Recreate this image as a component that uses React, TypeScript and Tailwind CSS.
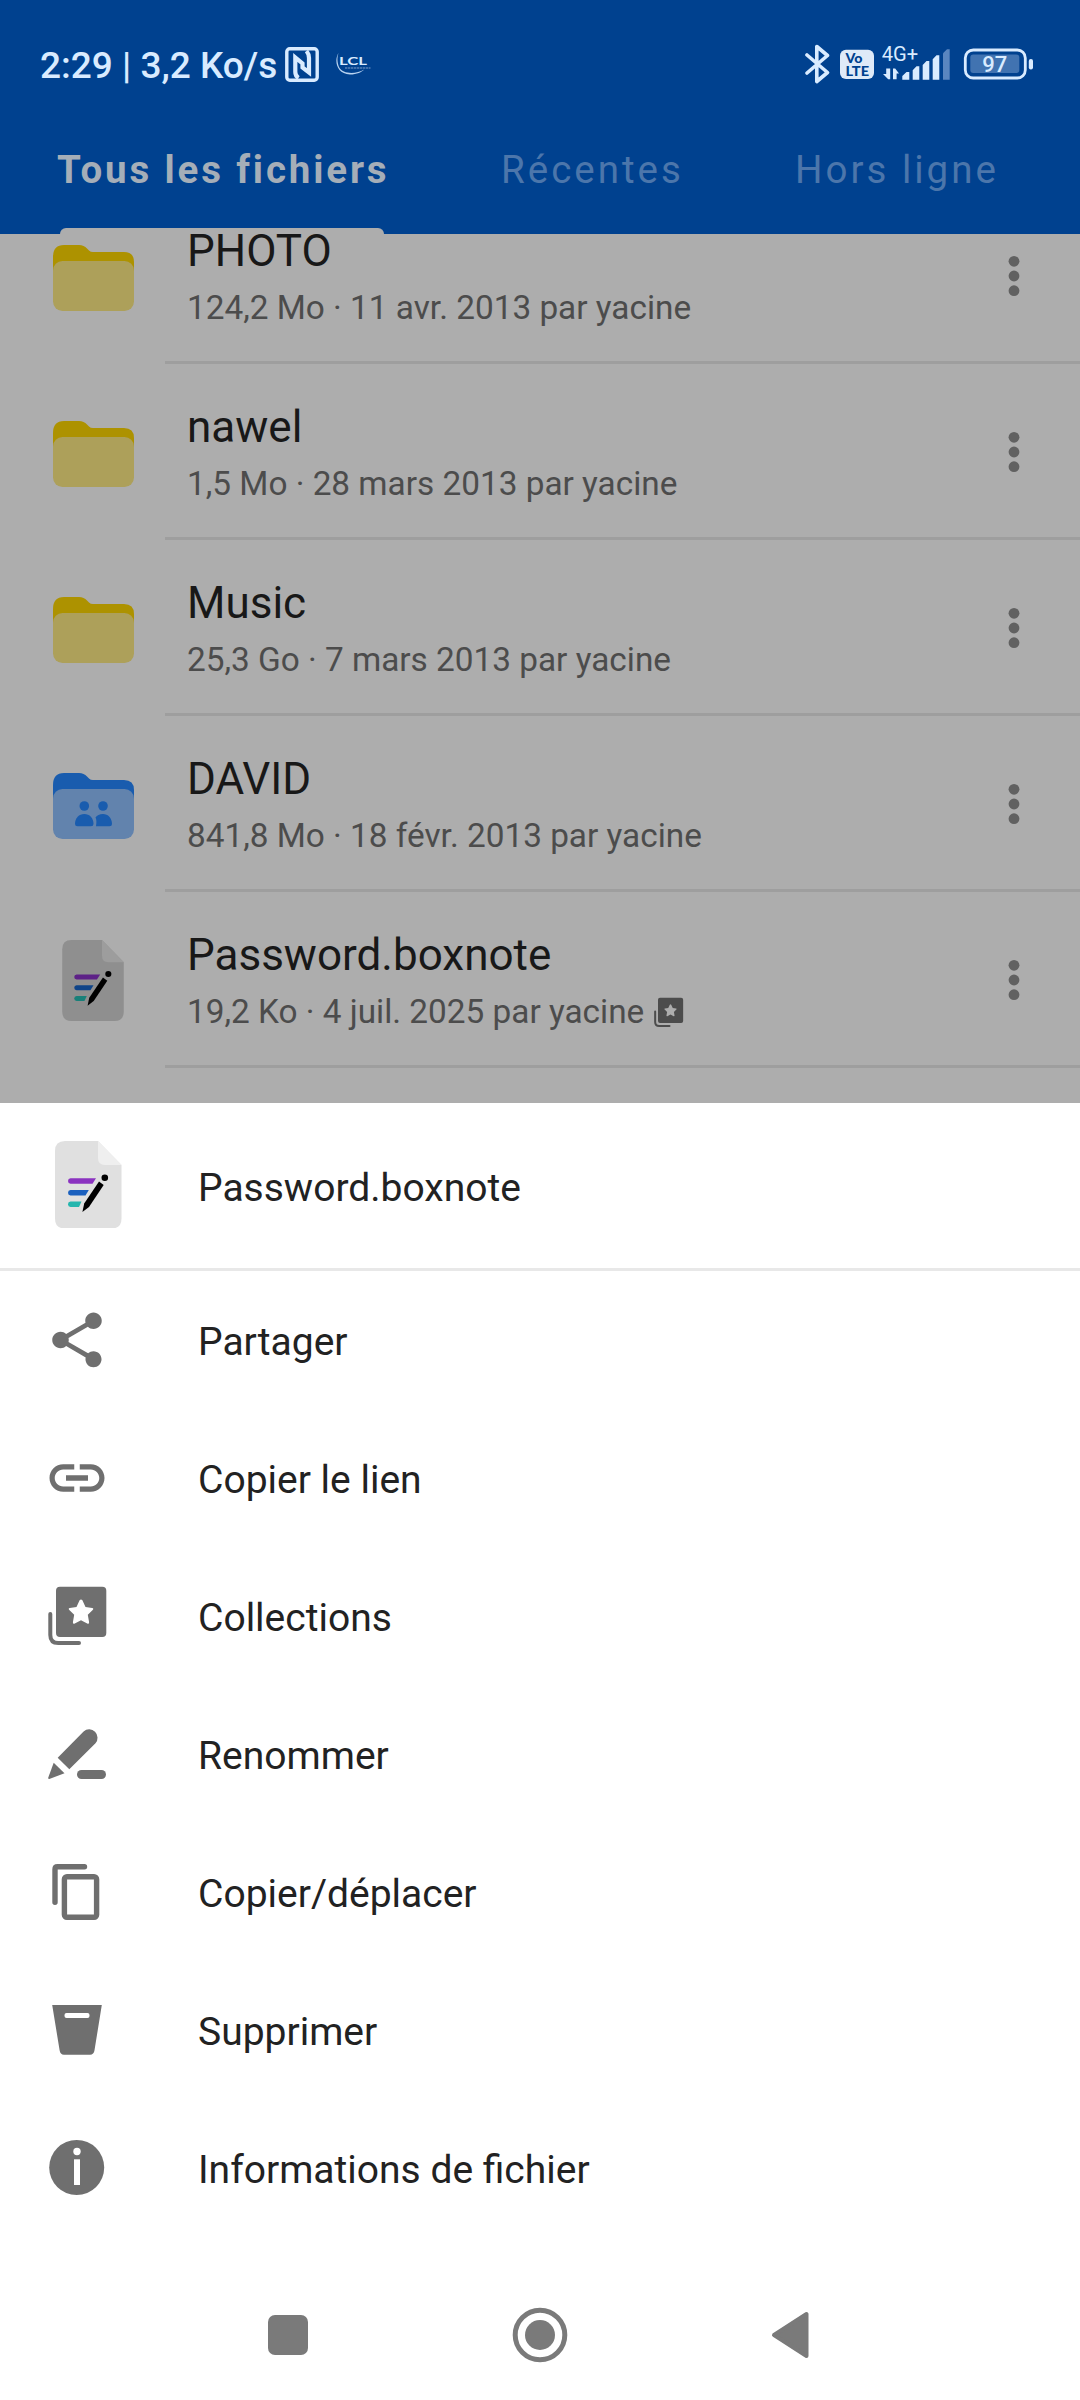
import { MdLink, MdShare } from "react-icons/md";
import type { ReactNode } from "react";

type FileRow = {
    name: string;
    details: string;
    kind: "folder" | "shared" | "note";
};

const files: FileRow[] = [
    { name: "PHOTO", details: "124,2 Mo · 11 avr. 2013 par yacine", kind: "folder" },
    { name: "nawel", details: "1,5 Mo · 28 mars 2013 par yacine", kind: "folder" },
    { name: "Music", details: "25,3 Go · 7 mars 2013 par yacine", kind: "folder" },
    { name: "DAVID", details: "841,8 Mo · 18 févr. 2013 par yacine", kind: "shared" },
    { name: "Password.boxnote", details: "19,2 Ko · 4 juil. 2025 par yacine", kind: "note" },
];

const NfcIcon = () => (
    <svg className="ml-[9px] h-[35px] w-[34px]" viewBox="0 0 34 35" fill="none" stroke="#d9ebff">
        <rect x="1.8" y="1.8" width="30.4" height="31.4" rx="3" strokeWidth="3.4" />
        <path d="M13.5 31Q10.3 29 10.3 25V10.5L17.5 16.5V20.5L24 25.5V11Q24 7 21.5 4" strokeWidth="4.2" />
    </svg>
);

const LclIcon = () => (
    <svg className="ml-[16px] h-[24px] w-[36px]" viewBox="0 0 36 24">
        <path d="M3.5 1C-1 8 1 22 15 22.5C22 22.5 27 20 29 17.5C22 22 8 23 4 15C2 10 2 5 3.5 1Z" fill="#b9d3f0" />
        <text x="4" y="12.8" fontSize="10.5" fontFamily="Lato" fontWeight="700" textLength="28" lengthAdjust="spacingAndGlyphs" fill="#d9ebff">LCL</text>
        <path d="M10 16H35.5" stroke="#5480b8" strokeWidth="1.4" strokeDasharray="2.4 0.6" />
    </svg>
);

const BluetoothIcon = () => (
    <svg className="h-[40px] w-[25px]" viewBox="0 0 25 40" fill="none" stroke="#d9ebff" strokeWidth="3.6" strokeLinejoin="round" strokeLinecap="round">
        <path d="M2 11L22.5 28.5L11.8 37.5V2.5L22.5 11.5L2 29" />
    </svg>
);

const VolteIcon = () => (
    <svg className="ml-[10px] h-[30px] w-[34px]" viewBox="0 0 34 30" fontFamily="Lato" fontWeight="900">
        <rect y="0.8" width="34" height="29.2" rx="6" fill="#dfeaf8" />
        <text x="5.5" y="14.2" fontSize="12.5" textLength="17" lengthAdjust="spacingAndGlyphs" fill="#00418f">Vo</text>
        <text x="5.5" y="26.5" fontSize="12.5" textLength="23.5" lengthAdjust="spacingAndGlyphs" fill="#00418f">LTE</text>
    </svg>
);

const SignalIcon = () => (
    <svg className="ml-[8px] h-[44px] w-[69px]" viewBox="0 0 69 44" fill="#d9ebff">
        <text x="-0.3" y="19" fontSize="19.8" fontFamily="Roboto" textLength="36.5" lengthAdjust="spacingAndGlyphs">4G+</text>
        <path d="M6.2 26.5H8.2V37.3H6.2L1 32H4.2V26.5ZM11 37.3V26.5H13.2L17 31.5H14.6V37.3Z" />
        <path d="M20.3 37.8V34L24.5 30H27.3V37.8ZM30.7 37.8V28.3L34.5 24.3H37.3V37.8ZM40.7 37.8V23L44.5 19H47.3V37.8ZM50.7 37.8V17.3L54.5 13.3H57.3V37.8Z" />
        <path d="M61 37.8V11.3L65 7.3H67.7V37.8Z" fill="#5a86c0" />
    </svg>
);

const BatteryIcon = () => (
    <svg className="ml-[11px] h-[32px] w-[71px]" viewBox="0 0 71 32">
        <rect x="3.3" y="2" width="60" height="28" rx="8" fill="none" stroke="#d9ebff" strokeWidth="2.8" />
        <rect x="8.3" y="6.6" width="49" height="18.4" rx="3" fill="#4173b1" />
        <rect x="66.8" y="11" width="4.2" height="10.5" rx="2" fill="#d9ebff" />
        <text x="20.3" y="24" fontSize="22.5" fontFamily="Roboto" fontWeight="500" textLength="25" lengthAdjust="spacingAndGlyphs" fill="#d9ebff">97</text>
    </svg>
);

const FolderIcon = ({ shared }: { shared?: boolean }) => (
    <svg className="h-[66px] w-[81px]" viewBox="0 0 81 66">
        <path
            d="M0 12Q0 0 11 0H26Q31 0 34 3.5L36 5.5Q37.5 7 40 7H71Q81 7 81 17V40H0Z"
            fill={shared ? "#195cae" : "#ad9200"}
        />
        <rect y="16" width="81" height="50" rx="9.5" fill={shared ? "#6283ad" : "#ada05a"} />
        {shared && (
            <g fill="#195cae">
                <circle cx="31.3" cy="33" r="4.8" />
                <circle cx="50" cy="33" r="4.8" />
                <path d="M22 51C22 45 26 41 31.3 41S40.5 45 40.5 51Q40.5 53.3 38 53.3H24.5Q22 53.3 22 51Z" />
                <path d="M42.5 44.5C44 42.5 46.5 41 50 41C55 41 59 45 59 51Q59 53.3 56.5 53.3H43Q44 47 42.5 44.5Z" />
            </g>
        )}
    </svg>
);

const NoteIcon = ({ dimmed }: { dimmed?: boolean }) => (
    <svg className={dimmed ? "h-[81px] w-[62px]" : "h-[87.5px] w-[66.5px]"} viewBox="0 0 66.5 87.5">
        <path d="M10 0H43L66.5 24V77.5Q66.5 87.5 56.5 87.5H10Q0 87.5 0 77.5V10Q0 0 10 0Z" fill={dimmed ? "#8f8f8f" : "#e0e0e0"} />
        <path d="M43 0L66.5 24H50Q43 24 43 17Z" fill={dimmed ? "#9d9d9d" : "#efefef"} />
        <path d="M15.5 37.3H41L37.5 42.7H15.5Q13 42.5 13 40T15.5 37.3Z" fill={dimmed ? "#5d2187" : "#8b33c0"} />
        <path d="M15.5 49H33.8L30.5 54.4H15.5Q13 54.2 13 51.7T15.5 49Z" fill={dimmed ? "#0f4488" : "#1b60be"} />
        <path d="M15.5 60.6H26.5L24 66H15.5Q13 65.8 13 63.3T15.5 60.6Z" fill={dimmed ? "#198079" : "#25b6ae"} />
        <path d="M44 40.5L48.7 44L34 66L27.4 71L29.2 62.5Z" fill="#000" />
        <circle cx="49.8" cy="36.7" r="3.3" fill="#000" />
    </svg>
);

const CollectionIcon = ({ className }: { className: string }) => (
    <svg className={className} viewBox="0 0 66 66">
        <path
            fillRule="evenodd"
            d="M16 3.7H58.3Q62.3 3.7 62.3 7.7V50Q62.3 54 58.3 54H16Q12 54 12 50V7.7Q12 3.7 16 3.7ZM35.6 17.3L32.5 24L25.8 24.9Q23.9 25.4 25.3 27L30.2 31.8L28.9 39.2Q28.9 41.3 30.8 40.5L37 37.2L43.2 40.5Q45.1 41.3 45.1 39.2L43.8 31.8L48.7 27Q50.1 25.4 48.2 24.9L41.5 24L38.4 17.3Q37 15.5 35.6 17.3Z"
            fill="currentColor"
        />
        <path d="M6.3 31V52Q6.3 60 14.3 60H35" fill="none" stroke="currentColor" strokeWidth="4" strokeLinecap="round" />
    </svg>
);

const RenameIcon = () => (
    <svg className="size-[66px]" viewBox="0 0 66 66" fill="currentColor">
        <path d="M13.7 36.7L39.6 10.4A8.4 8.4 0 0 1 51.5 22.2L25.3 48.2Z" />
        <path d="M9.7 41.7L20.5 52.3L5.3 58Q4 58.3 4.3 56.5Z" />
        <rect x="33" y="49" width="29" height="9" rx="4.5" />
    </svg>
);

const CopyIcon = () => (
    <svg className="size-[66px]" viewBox="0 0 66 66" fill="none" stroke="currentColor" strokeWidth="5.4" strokeLinecap="round">
        <path d="M11 43.3V10.2Q11 7.7 13.5 7.7H40.5" />
        <rect x="20.4" y="17.7" width="32.2" height="40.6" rx="2.5" />
    </svg>
);

const TrashIcon = () => (
    <svg className="size-[66px]" viewBox="0 0 66 66" fill="currentColor">
        <path d="M8.2 8H57.8L50.5 53.3Q49.8 57.7 46 57.7H20Q16.2 57.7 15.6 53.3Z" />
        <rect x="20.5" y="16" width="25" height="5" rx="2" fill="#fff" />
    </svg>
);

const InfoIcon = () => (
    <svg className="size-[66px]" viewBox="0 0 66 66" fill="currentColor">
        <circle cx="32.7" cy="32.5" r="27.5" />
        <circle cx="33" cy="16.5" r="3.7" fill="#fff" />
        <path d="M30 24.3H36V50H30Z" fill="#fff" />
    </svg>
);

const actions: { label: string; icon: ReactNode }[] = [
    { label: "Partager", icon: <MdShare size={66} /> },
    { label: "Copier le lien", icon: <MdLink size={66} /> },
    { label: "Collections", icon: <CollectionIcon className="size-[66px]" /> },
    { label: "Renommer", icon: <RenameIcon /> },
    { label: "Copier/déplacer", icon: <CopyIcon /> },
    { label: "Supprimer", icon: <TrashIcon /> },
    { label: "Informations de fichier", icon: <InfoIcon /> },
];

const StatusBar = () => (
    <div className="flex h-[128px] items-center pl-[40px] pr-[47px] text-[#d9ebff]">
        <span className="w-[236px] whitespace-nowrap pt-[4px] text-[37px] font-medium leading-[44px]">2:29 | 3,2 Ko/s</span>
        <NfcIcon />
        <LclIcon />
        <div className="ml-auto flex items-center">
            <BluetoothIcon />
            <VolteIcon />
            <SignalIcon />
            <BatteryIcon />
        </div>
    </div>
);

const Tabs = () => (
    <div className="flex h-[106px] whitespace-nowrap text-[38.5px] leading-[46px] tracking-[3px] text-[#4c76ab]">
        <div className="ml-[57px] flex w-[444px] flex-col pt-[19px]">
            <span className="font-bold tracking-[2.85px] text-[#a5aeb8]">Tous les fichiers</span>
            <div className="ml-[3px] mt-auto h-[6px] w-[324px] rounded-t-[6px] bg-[#adadad]" />
        </div>
        <span className="w-[294px] pt-[19px]">Récentes</span>
        <span className="pt-[19px]">Hors ligne</span>
    </div>
);

const FileItem = ({ name, details, kind }: FileRow) => (
    <div className="flex h-[176px] shrink-0">
        <div className={kind === "note" ? "w-[165px] pl-[62px] pt-[48px]" : "w-[165px] pl-[53px] pt-[57px]"}>
            {kind === "note" ? <NoteIcon dimmed /> : <FolderIcon shared={kind === "shared"} />}
        </div>
        <div className="flex flex-1 border-b-[3px] border-[#9e9e9e] pl-[22px]">
            <div className="flex-1 pt-[37px]">
                <p className="text-[44px] leading-[52px] text-[#181818]">{name}</p>
                <div className="mt-[11px] flex h-[40px] items-center text-[#4c4c4c]">
                    <p className="text-[33.35px] leading-[40px]">{details}</p>
                    {kind === "note" && <CollectionIcon className="ml-[8px] size-[33px]" />}
                </div>
            </div>
            <svg className="mr-[60px] mt-[67px] h-[42px] w-[12px]" viewBox="0 0 12 42" fill="#616161">
                <circle cx="6" cy="6.3" r="5.4" />
                <circle cx="6" cy="21" r="5.4" />
                <circle cx="6" cy="35.7" r="5.4" />
            </svg>
        </div>
    </div>
);

const BottomSheet = () => (
    <div className="h-[1134px] bg-white text-[39px] leading-[46px] text-[#222222]">
        <div className="flex h-[168px] items-center border-b-[3px] border-[#e8e8e8]">
            <div className="w-[198px] pb-[2px] pl-[55px]">
                <NoteIcon />
            </div>
            <p className="pt-[4px]">Password.boxnote</p>
        </div>
        {actions.map((action) => (
            <div key={action.label} className="flex h-[138px] items-center">
                <div className="w-[198px] pl-[44px] text-[#6f6f6f]">{action.icon}</div>
                <p className="pt-[4px]">{action.label}</p>
            </div>
        ))}
    </div>
);

const NavigationBar = () => (
    <div className="flex h-[163px] items-center bg-white pl-[268px] pt-[33px]">
        <div className="size-[40px] rounded-[7px] bg-[#7a7a7a]" />
        <svg className="ml-[204px] size-[56px]" viewBox="0 0 56 56">
            <circle cx="28" cy="28" r="24.8" fill="none" stroke="#7a7a7a" strokeWidth="5" />
            <circle cx="28" cy="28" r="15" fill="#7a7a7a" />
        </svg>
        <svg className="ml-[203px] h-[48px] w-[38px]" viewBox="0 0 38 48">
            <path d="M3 24L35.5 3V45Z" fill="#7a7a7a" stroke="#7a7a7a" strokeWidth="4" strokeLinejoin="round" />
        </svg>
    </div>
);

const App = () => {
    return (
        <div className="flex h-[2400px] w-[1080px] flex-col overflow-hidden bg-[#adadad] font-[Roboto,sans-serif]">
            <header className="h-[234px] shrink-0 bg-[#00418f]">
                <StatusBar />
                <Tabs />
            </header>
            {/* the list is scrolled, so the first row starts above the header's lower edge */}
            <main className="flex h-[869px] shrink-0 flex-col justify-end pb-[35px]">
                {files.map((file) => (
                    <FileItem key={file.name} {...file} />
                ))}
            </main>
            <BottomSheet />
            <NavigationBar />
        </div>
    );
};

export default App;
